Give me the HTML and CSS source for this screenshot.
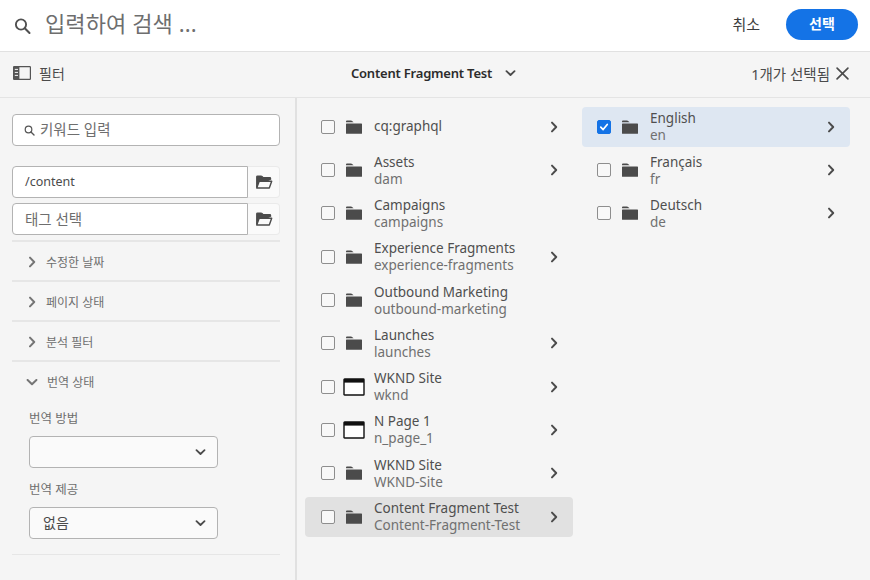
FILE: index.html
```html
<!DOCTYPE html>
<html lang="ko">
<head>
<meta charset="utf-8">
<title>검색</title>
<link rel="stylesheet" href="styles.css">
</head>
<body>
<svg class="defs" width="0" height="0" aria-hidden="true">
  <symbol id="folder" viewBox="0 0 18 16"><path d="M1 2.6C1 1.9 1.5 1.4 2.2 1.4H6c.5 0 .8.2 1.1.5L8.6 3.3H1z" fill="#4b4b4b"/><rect x="1" y="4.4" width="16" height="10.4" rx=".6" fill="#4b4b4b"/></symbol>
  <symbol id="page" viewBox="0 0 22 18"><rect x="1" y="1" width="20" height="16" rx=".6" fill="#fff" stroke="#111" stroke-width="1.4"/><rect x="1" y="1" width="20" height="3.6" fill="#111"/></symbol>
  <symbol id="right" viewBox="0 0 10 12"><path d="M3 1.6 7.2 6 3 10.4" fill="none" stroke="#4b4b4b" stroke-width="2" stroke-linecap="round" stroke-linejoin="round"/></symbol>
  <symbol id="down" viewBox="0 0 12 10"><path d="M1.6 3 6 7.2 10.4 3" fill="none" stroke="#4b4b4b" stroke-width="2" stroke-linecap="round" stroke-linejoin="round"/></symbol>
  <symbol id="open" viewBox="0 0 18 16"><path d="M1.7 13.5V2.8c0-.5.3-.8.8-.8h3.6c.4 0 .6.1.9.4l1.2 1.2h6.6c.5 0 .8.3.8.8v1.3" fill="#4b4b4b" stroke="#4b4b4b" stroke-width="1.2" stroke-linejoin="round"/><path d="M1.7 14 4.2 7.2h12.5L14.3 14z" fill="#fafafa" stroke="#4b4b4b" stroke-width="1.4" stroke-linejoin="round"/></symbol>
  <symbol id="search" viewBox="0 0 18 18"><circle cx="7.4" cy="7.4" r="5.4" fill="none" stroke="currentColor" stroke-width="2"/><path d="m11.4 11.4 5 5" stroke="currentColor" stroke-width="2.2" stroke-linecap="round"/></symbol>
</svg>

<header class="topbar">
  <svg class="top-search"><use href="#search"/></svg>
  <span class="top-placeholder">입력하여 검색 ...</span>
  <span class="cancel">취소</span>
  <button class="select-btn">선택</button>
</header>

<div class="toolbar">
  <div class="tb-left">
    <svg class="rail-icon" viewBox="0 0 18 14"><rect x=".6" y=".6" width="16.8" height="12.8" rx=".6" fill="none" stroke="#555" stroke-width="1.2"/><rect x=".6" y=".6" width="5.8" height="12.8" fill="#555"/><path d="M1.8 3.4h3.2M1.8 6.4h3.2M1.8 9.4h3.2" stroke="#f5f5f5" stroke-width="1"/></svg>
    <span>필터</span>
  </div>
  <div class="tb-center">
    <span>Content Fragment Test</span>
    <svg class="tb-down"><use href="#down"/></svg>
  </div>
  <div class="tb-right">
    <span>1개가 선택됨</span>
    <svg class="close" viewBox="0 0 12 12"><path d="M1 1 11 11M11 1 1 11" stroke="#4b4b4b" stroke-width="1.5" stroke-linecap="round"/></svg>
  </div>
</div>

<main class="body">
  <aside class="sidebar">
    <div class="keyword">
      <svg class="kw-icon"><use href="#search"/></svg>
      <span>키워드 입력</span>
    </div>
    <div class="path-row path-first">
      <div class="path-input value">/content</div>
      <div class="path-btn"><svg class="open-icon"><use href="#open"/></svg></div>
    </div>
    <div class="path-row path-second">
      <div class="path-input">태그 선택</div>
      <div class="path-btn"><svg class="open-icon"><use href="#open"/></svg></div>
    </div>
    <div class="acc"><svg class="acc-right"><use href="#right"/></svg><span>수정한 날짜</span></div>
    <div class="acc"><svg class="acc-right"><use href="#right"/></svg><span>페이지 상태</span></div>
    <div class="acc"><svg class="acc-right"><use href="#right"/></svg><span>분석 필터</span></div>
    <div class="acc acc-open"><svg class="acc-down"><use href="#down"/></svg><span>번역 상태</span></div>
    <div class="acc-body">
      <label class="field-label">번역 방법</label>
      <div class="dropdown"><span></span><svg class="drop-icon"><use href="#down"/></svg></div>
      <label class="field-label second-label">번역 제공</label>
      <div class="dropdown"><span>없음</span><svg class="drop-icon"><use href="#down"/></svg></div>
    </div>
  </aside>

  <section class="col col-one">
    <div class="row single"><i class="cb"></i><svg class="ic-folder"><use href="#folder"/></svg><div class="txt"><b>cq:graphql</b></div><svg class="chev"><use href="#right"/></svg></div>
    <div class="row"><i class="cb"></i><svg class="ic-folder"><use href="#folder"/></svg><div class="txt"><b>Assets</b><small>dam</small></div><svg class="chev"><use href="#right"/></svg></div>
    <div class="row"><i class="cb"></i><svg class="ic-folder"><use href="#folder"/></svg><div class="txt"><b>Campaigns</b><small>campaigns</small></div></div>
    <div class="row"><i class="cb"></i><svg class="ic-folder"><use href="#folder"/></svg><div class="txt"><b>Experience Fragments</b><small>experience-fragments</small></div><svg class="chev"><use href="#right"/></svg></div>
    <div class="row"><i class="cb"></i><svg class="ic-folder"><use href="#folder"/></svg><div class="txt"><b>Outbound Marketing</b><small>outbound-marketing</small></div></div>
    <div class="row"><i class="cb"></i><svg class="ic-folder"><use href="#folder"/></svg><div class="txt"><b>Launches</b><small>launches</small></div><svg class="chev"><use href="#right"/></svg></div>
    <div class="row"><i class="cb"></i><svg class="ic-page"><use href="#page"/></svg><div class="txt"><b>WKND Site</b><small>wknd</small></div><svg class="chev"><use href="#right"/></svg></div>
    <div class="row"><i class="cb"></i><svg class="ic-page"><use href="#page"/></svg><div class="txt"><b>N Page 1</b><small>n_page_1</small></div><svg class="chev"><use href="#right"/></svg></div>
    <div class="row"><i class="cb"></i><svg class="ic-folder"><use href="#folder"/></svg><div class="txt"><b>WKND Site</b><small>WKND-Site</small></div><svg class="chev"><use href="#right"/></svg></div>
    <div class="row hover"><i class="cb"></i><svg class="ic-folder"><use href="#folder"/></svg><div class="txt"><b>Content Fragment Test</b><small>Content-Fragment-Test</small></div><svg class="chev"><use href="#right"/></svg></div>
  </section>

  <section class="col col-two">
    <div class="row selected"><i class="cb checked"><svg viewBox="0 0 14 14"><path d="M3.2 7.2 6 10l4.8-6" fill="none" stroke="#fff" stroke-width="2" stroke-linecap="round" stroke-linejoin="round"/></svg></i><svg class="ic-folder"><use href="#folder"/></svg><div class="txt"><b>English</b><small>en</small></div><svg class="chev"><use href="#right"/></svg></div>
    <div class="row"><i class="cb"></i><svg class="ic-folder"><use href="#folder"/></svg><div class="txt"><b>Français</b><small>fr</small></div><svg class="chev"><use href="#right"/></svg></div>
    <div class="row"><i class="cb"></i><svg class="ic-folder"><use href="#folder"/></svg><div class="txt"><b>Deutsch</b><small>de</small></div><svg class="chev"><use href="#right"/></svg></div>
  </section>
</main>
</body>
</html>
```
FILE: styles.css
```css
* { box-sizing: border-box; }
html, body { margin: 0; height: 100%; overflow: hidden; }
body {
  width: 870px;
  height: 580px;
  display: flex;
  flex-direction: column;
  background: #f5f5f5;
  color: #4b4b4b;
  font-family: "Noto Sans", "Noto Sans CJK KR", sans-serif;
}
.defs { position: absolute; }

.topbar {
  height: 52px;
  flex: none;
  display: flex;
  align-items: center;
  background: #fff;
  border-bottom: 1px solid #e1e1e1;
  padding: 0 12px 2px 14px;
}
.top-search { width: 17px; height: 18px; color: #505050; flex: none; margin-top: 2px; }
.top-placeholder { margin: 0 0 5px 14px; font-size: 22px; color: #6e6e6e; letter-spacing: .1px; flex: 1; }
.cancel { font-size: 15px; color: #3c3c3c; margin-right: 26px; margin-bottom: 3px; }
.select-btn {
  width: 72px; height: 31px; padding: 0 0 3px; border: 0; border-radius: 16px;
  background: #1473e6; color: #fff; font: 700 14px "Noto Sans", "Noto Sans CJK KR", sans-serif;
}

.toolbar {
  height: 46px;
  flex: none;
  display: grid;
  grid-template-columns: 1fr auto 1fr;
  align-items: center;
  padding: 0 21px 3px 13px;
  border-bottom: 1px solid #e4e4e4;
}
.tb-left { display: flex; align-items: center; gap: 8px; font-size: 14px; }
.rail-icon { width: 18px; height: 14px; }
.tb-center { display: flex; align-items: center; gap: 13px; font-size: 13px; font-weight: 600; letter-spacing: -.2px; color: #2c2c2c; margin-left: 5px; }
.tb-down { width: 11px; height: 10px; }
.tb-right { display: flex; align-items: center; justify-content: flex-end; gap: 6px; font-size: 14.5px; color: #4b4b4b; }
.close { width: 13px; height: 13px; }

.body { flex: 1; display: flex; min-height: 0; }

.sidebar {
  width: 297px;
  flex: none;
  padding: 16px 15px 0 12px;
  border-right: 2px solid #e1e1e1;
}
.keyword {
  height: 32px;
  display: flex;
  align-items: center;
  gap: 5px;
  padding: 0 0 3px 11px;
  background: #fff;
  border: 1px solid #b3b3b3;
  border-radius: 4px;
  font-size: 14.5px;
  color: #6e6e6e;
}
.kw-icon { width: 11px; height: 11px; color: #555; margin-top: 3px; }
.path-row { display: flex; height: 32px; }
.path-first { margin-top: 20px; }
.path-second { margin-top: 5px; }
.path-input {
  width: 236px;
  display: flex;
  align-items: center;
  padding: 0 0 2px 12px;
  background: #fff;
  border: 1px solid #b3b3b3;
  border-radius: 4px 0 0 4px;
  font-size: 14.5px;
  color: #6e6e6e;
}
.path-input.value { font-size: 12.5px; color: #4b4b4b; }
.path-btn {
  width: 32px;
  display: flex;
  align-items: center;
  justify-content: center;
  background: #fafafa;
  border: 1px solid #eaeaea;
  border-left: 0;
  border-radius: 0 4px 4px 0;
}
.open-icon { width: 18px; height: 16px; }
.acc {
  height: 40px;
  display: flex;
  align-items: center;
  padding: 1px 0 0 15px;
  border-top: 2px solid #e6e6e6;
  font-size: 12px;
  color: #6e6e6e;
}
.path-second + .acc { margin-top: 5px; }
.acc svg { flex: none; }
.acc-right { width: 10px; height: 12px; margin-right: 9px; opacity: .75; }
.acc-down { width: 12px; height: 10px; margin-right: 9px; margin-left: -1px; opacity: .75; }
.acc-body { padding: 10px 0 15px 17px; border-bottom: 1px solid #e6e6e6; }
.field-label { display: block; height: 26px; font-size: 12.5px; color: #6e6e6e; line-height: 18px; }
.second-label { margin-top: 13px; height: 26px; }
.dropdown {
  width: 189px;
  height: 32px;
  display: flex;
  align-items: center;
  justify-content: space-between;
  padding: 0 11px 2px 13px;
  background: #fafafa;
  border: 1px solid #b3b3b3;
  border-radius: 4px;
  font-size: 14px;
  color: #4b4b4b;
}
.drop-icon { width: 11px; height: 10px; margin-top: 2px; }

.col { display: flex; flex-direction: column; gap: 3.34px; padding-top: 8.7px; }
.col-one { width: 276px; padding-left: 8px; margin-right: 9px; }
.col-two { width: 268px; }
.row {
  position: relative;
  height: 40px;
  display: flex;
  align-items: center;
  padding-left: 16px;
  border-radius: 4px;
  width: 268px;
  flex: none;
}
.row.hover { background: #e1e1e1; }
.row.selected { background: #dee7f2; }
.cb {
  width: 14px; height: 14px; flex: none;
  border: 1.5px solid #8e8e8e; border-radius: 2px; background: #f8f8f8;
  display: block;
}
.col-two .cb { margin-left: -1px; }
.cb.checked { background: #1473e6; border-color: #1473e6; }
.cb.checked svg { display: block; width: 100%; height: 100%; }
.ic-folder { width: 18px; height: 16px; margin-left: 10px; flex: none; }
.ic-page { width: 22px; height: 18px; margin-left: 8px; flex: none; margin-right: -2px; }
.txt { margin-left: 11px; display: flex; flex-direction: column; flex: 1; min-width: 0; }
.txt b { font-weight: 400; font-size: 13.5px; line-height: 17px; color: #4f4f4f; }
.txt small { font-size: 13.5px; line-height: 16px; color: #707070; }
.chev { width: 10px; height: 12px; margin-right: 14px; flex: none; }
```
